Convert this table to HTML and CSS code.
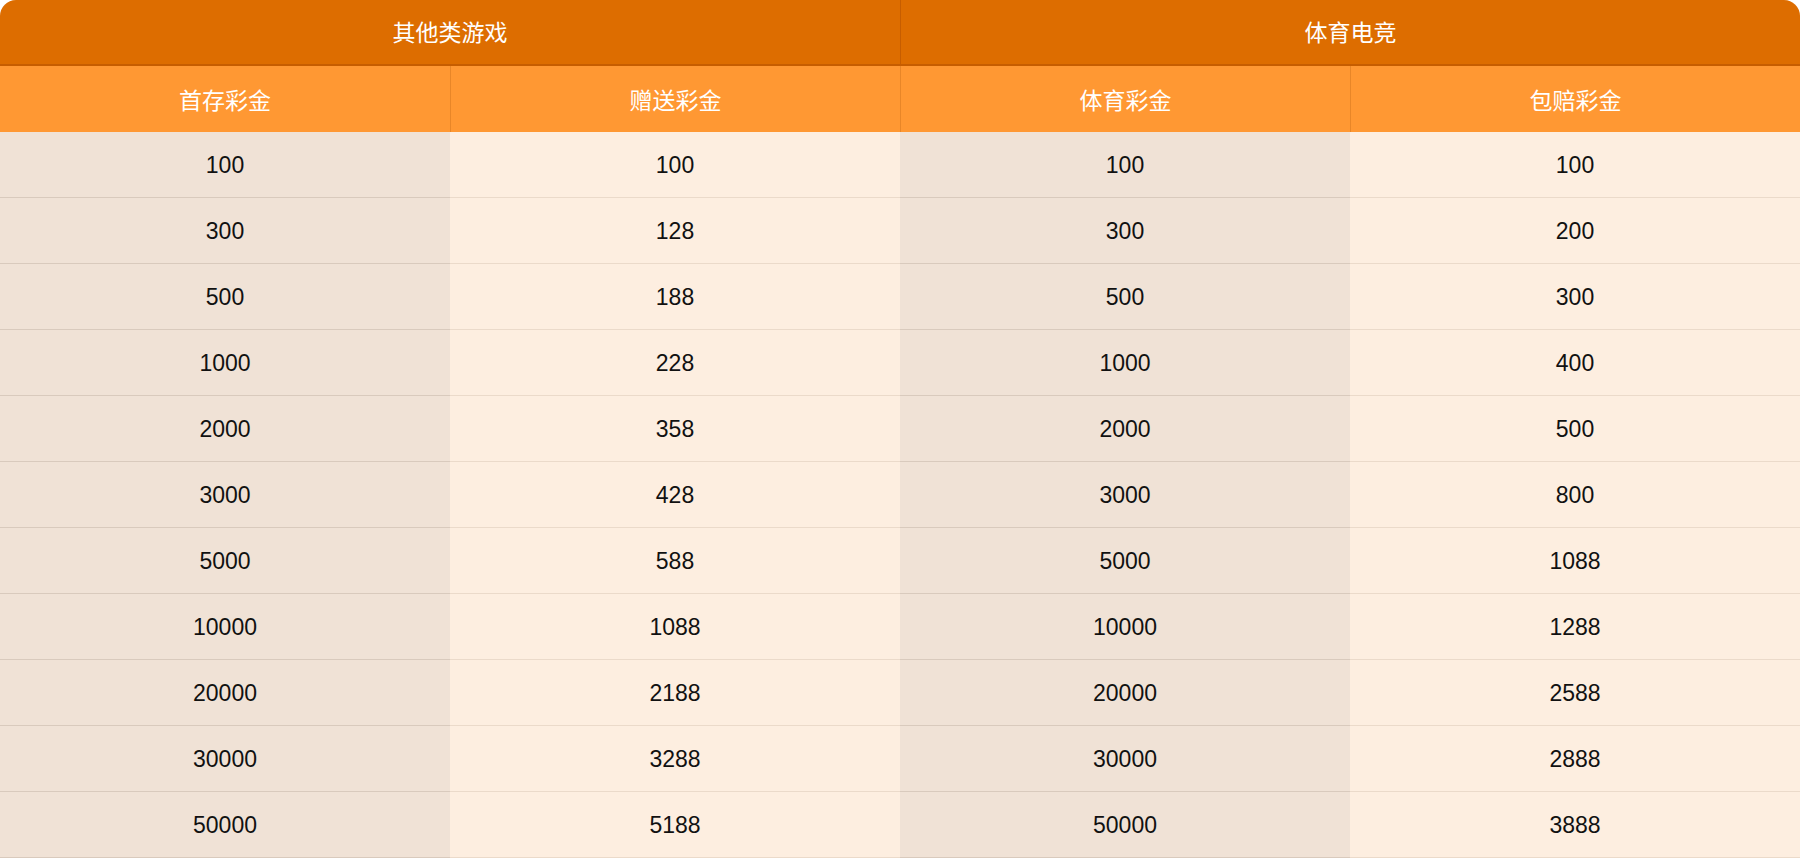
FILE: index.html
```html
<!DOCTYPE html>
<html lang="zh-CN">
<head>
<meta charset="utf-8">
<title>彩金表</title>
<link rel="stylesheet" href="styles.css">
</head>
<body>
<div class="bonus-table">
  <div class="group-row">
    <div class="group-cell">其他类游戏</div>
    <div class="group-cell">体育电竞</div>
  </div>
  <div class="head-row">
    <div class="head-cell">首存彩金</div>
    <div class="head-cell">赠送彩金</div>
    <div class="head-cell">体育彩金</div>
    <div class="head-cell">包赔彩金</div>
  </div>
  <div class="data-row"><div class="cell">100</div><div class="cell">100</div><div class="cell">100</div><div class="cell">100</div></div>
  <div class="data-row"><div class="cell">300</div><div class="cell">128</div><div class="cell">300</div><div class="cell">200</div></div>
  <div class="data-row"><div class="cell">500</div><div class="cell">188</div><div class="cell">500</div><div class="cell">300</div></div>
  <div class="data-row"><div class="cell">1000</div><div class="cell">228</div><div class="cell">1000</div><div class="cell">400</div></div>
  <div class="data-row"><div class="cell">2000</div><div class="cell">358</div><div class="cell">2000</div><div class="cell">500</div></div>
  <div class="data-row"><div class="cell">3000</div><div class="cell">428</div><div class="cell">3000</div><div class="cell">800</div></div>
  <div class="data-row"><div class="cell">5000</div><div class="cell">588</div><div class="cell">5000</div><div class="cell">1088</div></div>
  <div class="data-row"><div class="cell">10000</div><div class="cell">1088</div><div class="cell">10000</div><div class="cell">1288</div></div>
  <div class="data-row"><div class="cell">20000</div><div class="cell">2188</div><div class="cell">20000</div><div class="cell">2588</div></div>
  <div class="data-row"><div class="cell">30000</div><div class="cell">3288</div><div class="cell">30000</div><div class="cell">2888</div></div>
  <div class="data-row"><div class="cell">50000</div><div class="cell">5188</div><div class="cell">50000</div><div class="cell">3888</div></div>
</div>
</body>
</html>
```

FILE: styles.css
```css
html, body {
  margin: 0;
  padding: 0;
  background: #ffffff;
}

body {
  font-family: "Liberation Sans", "Noto Sans CJK SC", sans-serif;
}

.bonus-table {
  width: 1800px;
  border-radius: 16px 16px 0 0;
  overflow: hidden;
}

.group-row {
  display: grid;
  grid-template-columns: 1fr 1fr;
  height: 64px;
  background: #dd6d00;
  border-bottom: 2px solid #c65d00;
}

.group-cell {
  display: flex;
  align-items: center;
  justify-content: center;
  color: #ffffff;
  font-family: "Noto Sans CJK SC", sans-serif;
  font-size: 23px;
  padding-bottom: 2px;
}

.group-cell + .group-cell {
  border-left: 1px solid #c65d00;
}

.head-row {
  display: grid;
  grid-template-columns: repeat(4, 1fr);
  height: 66px;
  background: #ff9833;
}

.head-cell {
  display: flex;
  align-items: center;
  justify-content: center;
  color: #ffffff;
  font-family: "Noto Sans CJK SC", sans-serif;
  font-size: 23px;
}

.head-cell + .head-cell {
  border-left: 1px solid #e88628;
}

.data-row {
  display: grid;
  grid-template-columns: repeat(4, 1fr);
  height: 66px;
}

.cell {
  display: flex;
  align-items: center;
  justify-content: center;
  color: #111111;
  font-size: 23px;
  background: #fdeee0;
  border-bottom: 1px solid #ebdaca;
  padding-top: 1px;
}

.cell:nth-child(odd) {
  background: #f0e2d6;
  border-bottom-color: #d9cabd;
}
```
